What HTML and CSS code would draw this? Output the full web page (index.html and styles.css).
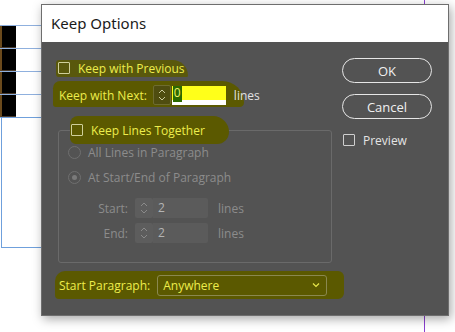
FILE: index.html
```html
<!DOCTYPE html>
<html>
<head>
<meta charset="utf-8">
<link rel="stylesheet" href="styles.css">
</head>
<body>
<div class="page">
  <div class="doc-table">
    <div class="cell-row"><span class="blk"></span></div>
    <div class="cell-row"><span class="blk"></span></div>
    <div class="cell-row"><span class="blk"></span></div>
    <div class="cell-row"><span class="blk"></span></div>
  </div>
  <div class="doc-frame"></div>
  <div class="guide"></div>

  <div class="dialog">
    <div class="titlebar">Keep Options</div>
    <div class="dlg-body">
      <div class="left">
        <div class="row row-prev hl">
          <span class="cb cb-hl"></span>
          <span class="ytext">Keep with Previous</span>
        </div>
        <div class="row row-next hl">
          <span class="ytext">Keep with Next:</span>
          <span class="spin spin-hl">
            <svg width="12" height="16" viewBox="0 0 12 16"><path d="M3 6 L6 3 L9 6 M3 10 L6 13 L9 10" fill="none" stroke="#c8c89a" stroke-width="1"/></svg>
          </span>
          <span class="num-field"><span class="sel">0</span></span>
          <span class="unit">lines</span>
        </div>

        <fieldset class="group">
          <legend class="legend"><span class="cb cb-hl"></span><span class="ytext">Keep Lines Together</span></legend>
          <div class="radio-row r1"><span class="radio"></span><span class="dis">All Lines in Paragraph</span></div>
          <div class="radio-row r2"><span class="radio on"></span><span class="dis">At Start/End of Paragraph</span></div>
          <div class="field-row f1">
            <span class="flabel dis">Start:</span>
            <span class="spin">
              <svg width="12" height="16" viewBox="0 0 12 16"><path d="M3 6 L6 3 L9 6 M3 10 L6 13 L9 10" fill="none" stroke="#8a8a8a" stroke-width="1"/></svg>
            </span>
            <span class="dfield">2</span>
            <span class="dis unit2">lines</span>
          </div>
          <div class="field-row f2">
            <span class="flabel dis">End:</span>
            <span class="spin">
              <svg width="12" height="16" viewBox="0 0 12 16"><path d="M3 6 L6 3 L9 6 M3 10 L6 13 L9 10" fill="none" stroke="#8a8a8a" stroke-width="1"/></svg>
            </span>
            <span class="dfield">2</span>
            <span class="dis unit2">lines</span>
          </div>
        </fieldset>

        <div class="row row-start hl">
          <span class="ytext">Start Paragraph:</span>
          <span class="dropdown">
            <span class="ytext">Anywhere</span>
            <svg width="10" height="8" viewBox="0 0 10 8"><path d="M2 2.5 L5 5.5 L8 2.5" fill="none" stroke="#e8e84a" stroke-width="1.2"/></svg>
          </span>
        </div>
      </div>

      <div class="right">
        <div class="btn btn-ok">OK</div>
        <div class="btn btn-cancel">Cancel</div>
        <div class="row preview"><span class="cb"></span><span class="wtext">Preview</span></div>
      </div>
    </div>
  </div>
</div>
</body>
</html>
```

FILE: styles.css
```css
* { box-sizing: border-box; }
html, body { margin: 0; padding: 0; }
body {
  width: 455px;
  height: 332px;
  overflow: hidden;
  background: #ffffff;
  font-family: "Open Sans", "Noto Sans", sans-serif;
}
.page { position: relative; width: 455px; height: 332px; }

/* document behind dialog */
.doc-table {
  position: absolute;
  left: 0;
  top: 25px;
  width: 45px;
  border-top: 1px solid #8fb0de;
}
.cell-row {
  height: 23px;
  display: flex;
  border-bottom: 1px solid #8fb0de;
}
.blk {
  width: 16px;
  background: #000;
  border-left: 2px solid #6b4a1c;
  border-bottom: 1px solid #4a3a2a;
}
.doc-frame {
  position: absolute;
  left: 1px;
  top: 117px;
  width: 50px;
  height: 131px;
  border: 1px solid #6fa0dc;
}
.guide {
  position: absolute;
  left: 424px;
  top: 0;
  width: 1px;
  height: 332px;
  background: #8a3fd0;
}

/* dialog window */
.dialog {
  position: absolute;
  left: 41px;
  top: 4px;
  width: 408px;
  height: 312px;
  border: 1px solid #6e6e6e;
  box-shadow: 2px 3px 10px rgba(0,0,0,0.35);
  display: flex;
  flex-direction: column;
  background: #535353;
}
.titlebar {
  height: 37px;
  flex: none;
  background: #ffffff;
  color: #1a1a1a;
  font-family: "Noto Sans", "Open Sans", sans-serif;
  font-size: 15px;
  line-height: 37px;
  padding-left: 9px;
}
.dlg-body {
  flex: 1;
  display: flex;
  padding: 0 16px 0 16px;
  font-size: 12px;
  color: #e2e2e2;
}
.left {
  width: 274px;
  display: flex;
  flex-direction: column;
}
.right {
  margin-left: auto;
  width: 90px;
  display: flex;
  flex-direction: column;
}

.row {
  display: flex;
  align-items: center;
  position: relative;
}
.hl > * { position: relative; z-index: 1; }
.hl::before {
  content: "";
  position: absolute;
  background: #5b5900;
  z-index: 0;
}
.ytext { color: #eded4c; white-space: nowrap; }
.wtext { color: #e4e4e4; }
.dis { color: #8c8c8c; white-space: nowrap; }

.cb {
  width: 12px;
  height: 12px;
  border: 1px solid #cfcfcf;
  border-radius: 1px;
  flex: none;
  margin-right: 8px;
}
.cb-hl { border-color: #cfcf9a; }

.row-prev { height: 20px; margin-top: 16px; }
.row-prev::before {
  left: -2px; top: 2px; width: 132px; height: 17px;
  border-radius: 8px 40px 4px 8px;
  opacity: 0.85;
}
.row-next { height: 24px; margin-top: 5px; margin-left: 1px; }
.row-next::before {
  left: -6px; top: -2px; width: 191px; height: 26px;
  border-radius: 10px 30px 6px 4px;
}
.spin {
  width: 18px;
  height: 20px;
  background: #5d5d5d;
  border-radius: 2px;
  display: flex;
  align-items: center;
  justify-content: center;
  flex: none;
}
.spin-hl {
  margin-left: 6px;
  background: #4f4d10;
  border: 1px solid #6e6c30;
}
.num-field {
  width: 54px;
  height: 19px;
  margin-left: 1px;
  background: linear-gradient(#ffff1a 0, #ffff1a 14px, #ffffff 14px);
  display: flex;
  align-items: center;
  padding-left: 1px;
}
.sel {
  background: #2c6a00;
  color: #f0f070;
  line-height: 14px;
  height: 16px;
  padding: 0 1px;
  margin-top: -2px;
}
.unit { margin-left: 8px; color: #e2e2e2; }

/* group */
.group {
  margin: 9px 0 0 0;
  padding: 0 10px 19px 9px;
  border: 1px solid #6a6a6a;
  border-radius: 3px;
  min-width: 0;
}
.legend {
  display: flex;
  align-items: center;
  height: 28px;
  padding: 0 24px 0 1px;
  margin-left: 2px;
  background: #5b5900;
  border-radius: 8px 16px 12px 6px;
}
.radio-row {
  display: flex;
  align-items: center;
  height: 16px;
}
.r2 { margin-top: 9px; }
.radio {
  width: 13px;
  height: 13px;
  border-radius: 50%;
  border: 1px solid #6f6f6f;
  margin-right: 7px;
  flex: none;
  display: flex;
  align-items: center;
  justify-content: center;
}
.radio.on::after {
  content: "";
  width: 5px;
  height: 5px;
  border-radius: 50%;
  background: #7a7a7a;
}
.field-row {
  display: flex;
  align-items: center;
  height: 20px;
}
.f1 { margin-top: 13px; }
.f2 { margin-top: 5px; }
.flabel { width: 67px; text-align: right; padding-right: 7px; }
.dfield {
  width: 55px;
  height: 20px;
  background: #5b5b5b;
  border-radius: 0 2px 2px 0;
  color: #b4b4b4;
  line-height: 20px;
  padding-left: 5px;
}
.unit2 { margin-left: 10px; }

/* start paragraph */
.row-start { height: 28px; margin-top: 8px; margin-left: 1px; }
.row-start::before {
  left: -4px; top: 0; width: 289px; height: 28px;
  border-radius: 10px 6px 6px 4px;
}
.dropdown {
  margin-left: 7px;
  width: 170px;
  height: 21px;
  border: 1px solid #8a8850;
  border-radius: 3px;
  display: flex;
  align-items: center;
  justify-content: space-between;
  padding: 0 5px 0 5px;
}

/* right column */
.btn {
  height: 25px;
  border: 1.5px solid #e6e6e6;
  border-radius: 13px;
  color: #f0f0f0;
  font-size: 13px;
  display: flex;
  align-items: center;
  justify-content: center;
}
.btn-ok { margin-top: 16px; }
.btn-cancel { margin-top: 11px; }
.preview { margin-top: 13px; height: 16px; margin-left: 1px; }
```
